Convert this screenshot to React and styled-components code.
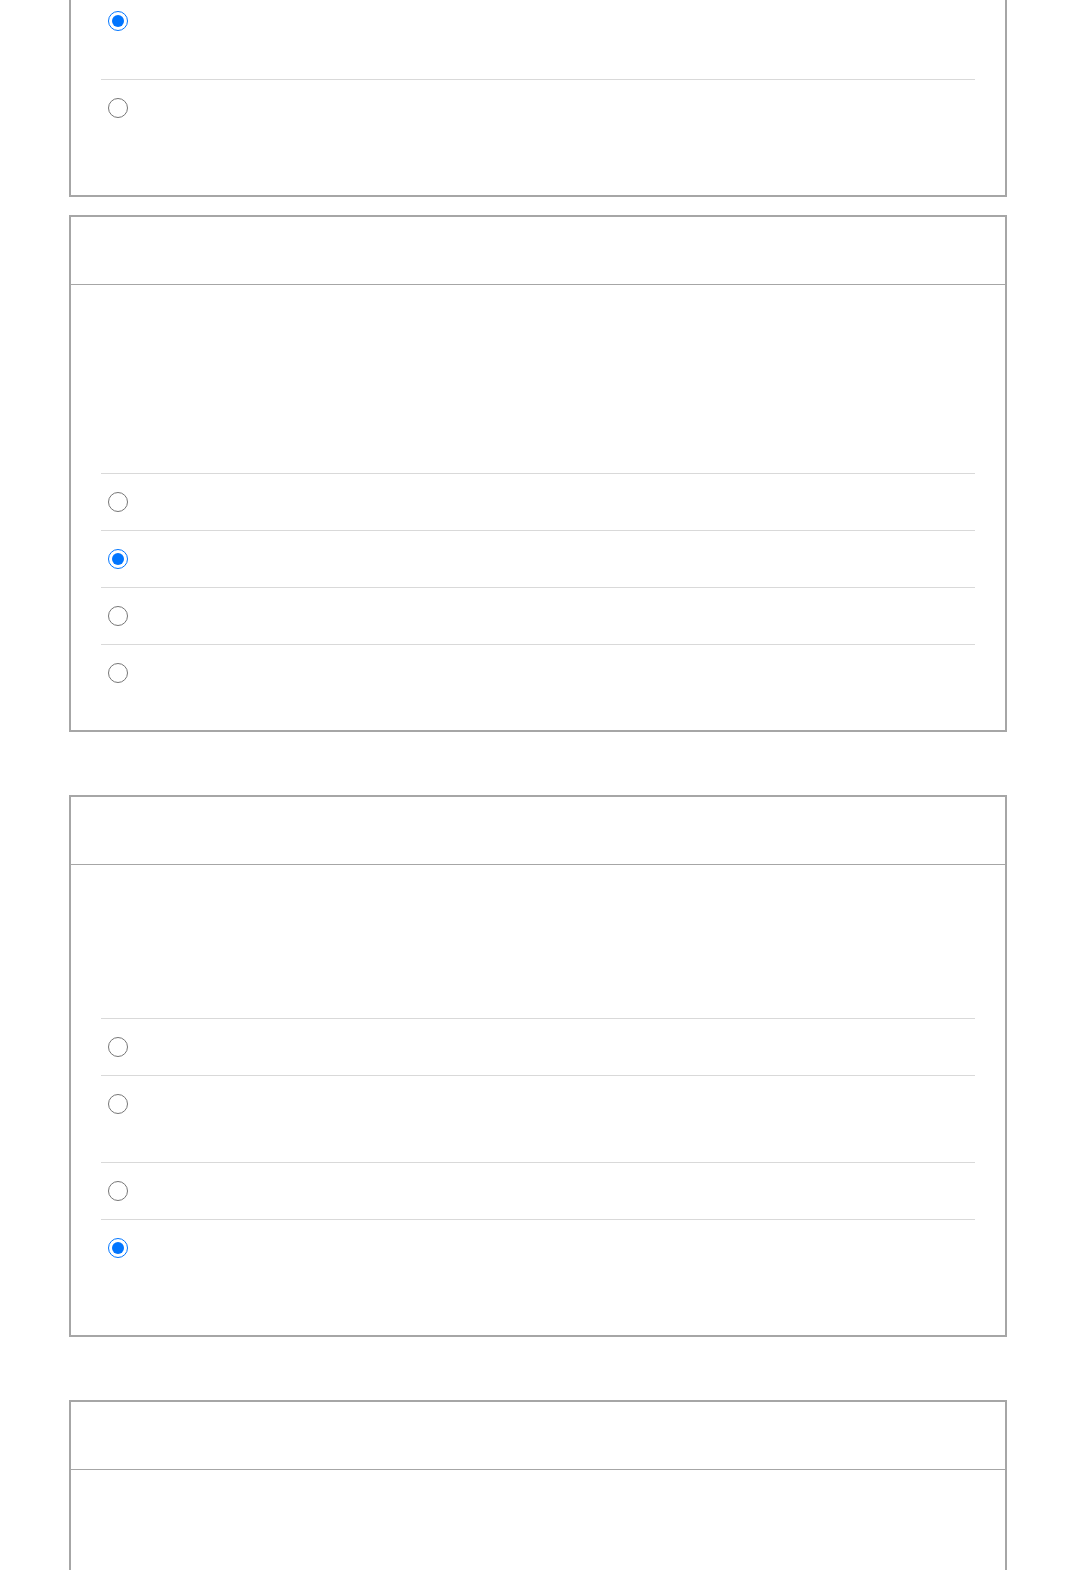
import React from "react";
import styled, { createGlobalStyle } from "styled-components";

const GlobalStyle = createGlobalStyle`
  html, body {
    margin: 0;
    padding: 0;
    background: #ffffff;
    font-family: "Liberation Sans", Arial, sans-serif;
  }
`;

// 페이지 전체
const Page = styled.div`
  margin-top: -40px;
  padding: 0 69px 40px 69px;
`;

const Section = styled.section`
  display: flex;
  flex-direction: column;
  gap: ${(p) => p.gap || 0}px;
  margin-bottom: 63px;
`;

// 카드
const Card = styled.div`
  border: 2px solid #a6a6a6;
  background: #fff;
`;

const CardHeader = styled.div`
  height: 67px;
  border-bottom: 1px solid #a6a6a6;
`;

const CardBody = styled.div`
  padding: 30px 30px 29px;
`;

// 질문 영역 (내용 없음)
const Question = styled.div`
  height: ${(p) => p.h}px;
`;

const Options = styled.div`
  display: flex;
  flex-direction: column;
`;

const Option = styled.label`
  display: flex;
  align-items: flex-start;
  gap: 12px;
  padding: 18px 7px;
  border-top: 1px solid #d9d9d9;
`;

const Radio = styled.input.attrs({ type: "radio" })`
  width: 20px;
  height: 20px;
  margin: 0;
  flex: none;
  accent-color: #0075ff;
`;

const OptionText = styled.span`
  display: block;
  height: ${(p) => (p.lines === 2 ? 50 : 20)}px;
  font-size: 16px;
  color: #222;
`;

const questions = [
  { id: "q1", head: false, q: 0, opts: [2, 2], checked: 0 },
  { id: "q2", head: true, q: 158, opts: [1, 1, 1, 1], checked: 1 },
  { id: "q3", head: true, q: 123, opts: [1, 2, 1, 2], checked: 3 },
  { id: "q4", head: true, q: 160, opts: [], checked: -1 },
];

const QuestionCard = ({ item }) => (
  <Card>
    {item.head && <CardHeader />}
    <CardBody>
      {item.q > 0 && <Question h={item.q} />}
      <Options>
        {item.opts.map((lines, i) => (
          <Option key={i}>
            <Radio name={item.id} defaultChecked={i === item.checked} />
            <OptionText lines={lines} />
          </Option>
        ))}
      </Options>
    </CardBody>
  </Card>
);

export default function App() {
  return (
    <>
      <GlobalStyle />
      <Page>
        <Section gap={18}>
          <QuestionCard item={questions[0]} />
          <QuestionCard item={questions[1]} />
        </Section>
        <Section>
          <QuestionCard item={questions[2]} />
        </Section>
        <Section>
          <QuestionCard item={questions[3]} />
        </Section>
      </Page>
    </>
  );
}
